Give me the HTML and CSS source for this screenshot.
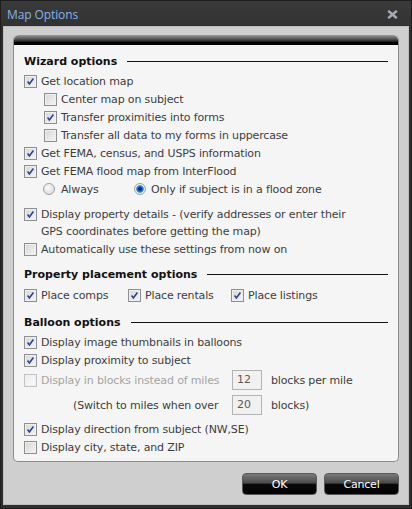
FILE: index.html
```html
<!DOCTYPE html>
<html>
<head>
<meta charset="utf-8">
<link rel="stylesheet" href="styles.css">
</head>
<body>
<div class="window">
  <div class="titlebar">
    <span class="title">Map Options</span>
    <svg class="close" width="11" height="9" viewBox="0 0 11 9"><path d="M1.2 0.8 L9.8 8.2 M9.8 0.8 L1.2 8.2" stroke="#a3adb8" stroke-width="2.4" fill="none"/></svg>
  </div>
  <div class="client">
    <div class="panel">
      <div class="panel-top"></div>
      <div class="panel-body">
        <div class="section-head first"><span>Wizard options</span><i class="rule"></i></div>
        <div class="row"><span class="cb on"></span><span class="lbl">Get location map</span></div>
        <div class="row sub"><span class="cb"></span><span class="lbl">Center map on subject</span></div>
        <div class="row sub"><span class="cb on"></span><span class="lbl">Transfer proximities into forms</span></div>
        <div class="row sub"><span class="cb"></span><span class="lbl">Transfer all data to my forms in uppercase</span></div>
        <div class="row"><span class="cb on"></span><span class="lbl">Get FEMA, census, and USPS information</span></div>
        <div class="row"><span class="cb on"></span><span class="lbl">Get FEMA flood map from InterFlood</span></div>
        <div class="row radios">
          <span class="radio-item always"><span class="rb"></span><span class="lbl">Always</span></span>
          <span class="radio-item"><span class="rb on"></span><span class="lbl">Only if subject is in a flood zone</span></span>
        </div>
        <div class="row multi"><span class="cb on"></span><span class="lbl">Display property details - (verify addresses or enter their<br>GPS coordinates before getting the map)</span></div>
        <div class="row"><span class="cb"></span><span class="lbl">Automatically use these settings from now on</span></div>

        <div class="section-head second"><span>Property placement options</span><i class="rule"></i></div>
        <div class="row place">
          <span class="place-item w1"><span class="cb on"></span><span class="lbl">Place comps</span></span>
          <span class="place-item w2"><span class="cb on"></span><span class="lbl">Place rentals</span></span>
          <span class="place-item"><span class="cb on"></span><span class="lbl">Place listings</span></span>
        </div>

        <div class="section-head third"><span>Balloon options</span><i class="rule"></i></div>
        <div class="row"><span class="cb on"></span><span class="lbl">Display image thumbnails in balloons</span></div>
        <div class="row"><span class="cb on"></span><span class="lbl">Display proximity to subject</span></div>
        <div class="row field-row">
          <span class="field-label"><span class="cb disabled"></span><span class="lbl dim">Display in blocks instead of miles</span></span>
          <span class="box">12</span>
          <span class="lbl after">blocks per mile</span>
        </div>
        <div class="row field-row second-field">
          <span class="field-label indent"><span class="lbl">(Switch to miles when over</span></span>
          <span class="box">20</span>
          <span class="lbl after">blocks)</span>
        </div>
        <div class="row after-fields"><span class="cb on"></span><span class="lbl">Display direction from subject (NW,SE)</span></div>
        <div class="row"><span class="cb"></span><span class="lbl">Display city, state, and ZIP</span></div>
      </div>
    </div>
    <div class="buttons">
      <button class="btn">OK</button>
      <button class="btn">Cancel</button>
    </div>
  </div>
</div>
</body>
</html>
```

FILE: styles.css
```css
* { box-sizing: border-box; }
html, body { margin: 0; padding: 0; }
body {
  width: 412px;
  height: 509px;
  background: #2e2e2e;
  font-family: "DejaVu Sans", sans-serif;
  font-size: 11px;
  overflow: hidden;
}
.window {
  width: 412px;
  height: 509px;
  display: flex;
  flex-direction: column;
  background: #2f2f2f;
  border: 1px solid #1e1e1e;
}
.titlebar {
  height: 25px;
  flex: none;
  display: flex;
  align-items: center;
  justify-content: space-between;
  padding: 0 13px 0 6px;
  background: linear-gradient(#3a3a3a, #323232);
}
.title {
  font-family: "Open Sans", sans-serif;
  font-size: 12px;
  color: #86b2e4;
  letter-spacing: -0.1px;
  margin-top: 1px;
}
.close { display: block; margin-top: 1px; }
.client {
  flex: 1;
  margin: 0 2px 3px 2px;
  background: #cfcfcf;
  border: 1px solid #bdbdbd;
  padding: 8px 9px 0 9px;
  display: flex;
  flex-direction: column;
}
.panel {
  height: 427px;
  border-radius: 5px;
  background: #f5f5f5;
  border: 1px solid #8d8d8d;
  border-top: none;
  display: flex;
  flex-direction: column;
  overflow: hidden;
}
.panel-top {
  height: 10px;
  flex: none;
  background: linear-gradient(#9a9a9a 0, #555 40%, #222 65%, #000 70%, #000 100%);
  border-radius: 5px 5px 0 0;
}
.panel-body {
  padding: 7px 10px 0 10px;
  color: #3d3d3d;
}
.section-head {
  height: 18px;
  display: flex;
  align-items: center;
  font-weight: bold;
  color: #111;
}
.section-head.first { margin-bottom: 2px; }
.section-head.second { margin-top: 7px; margin-bottom: 3px; }
.section-head.third { margin-top: 9px; margin-bottom: 2px; }
.rule {
  flex: 1;
  height: 1px;
  background: #111;
  margin-left: 10px;
}
.row {
  height: 18px;
  display: flex;
  align-items: center;
  white-space: nowrap;
}
.lbl { letter-spacing: -0.15px; }
.row .cb + .lbl { margin-left: 4px; }
.row.sub { padding-left: 20px; }
.cb {
  width: 13px;
  height: 13px;
  flex: none;
  border: 1px solid #8e8f90;
  background: linear-gradient(135deg, #d6d6d6, #f5f5f5);
  box-shadow: inset 0 0 0 1px #f0f0f0;
}
.cb.on {
  background-image: url("data:image/svg+xml;utf8,<svg xmlns='http://www.w3.org/2000/svg' width='11' height='11' viewBox='0 0 11 11'><path d='M2.6 5.6 L4.4 8 L8.4 2.6' stroke='%232a4193' stroke-width='1.6' fill='none'/></svg>"), linear-gradient(135deg, #d6d6d6, #f5f5f5);
  background-repeat: no-repeat;
  background-position: center;
}
.cb.disabled {
  border-color: #c3c3c3;
  background: linear-gradient(135deg, #ececec, #fafafa);
}
.dim { color: #a4a4a4; }
.radios { padding-left: 19px; }
.radio-item { display: flex; align-items: center; }
.radio-item.always { width: 91px; }
.rb {
  width: 12px;
  height: 12px;
  flex: none;
  border-radius: 50%;
  border: 1px solid #a0a0a0;
  background: radial-gradient(circle at 40% 35%, #fbfbfb, #d4d4d4);
  margin-right: 6px;
}
.rb.on {
  background: radial-gradient(circle, #0d2c63 0, #0d2c63 1.3px, #1c74d6 2.6px, #56a2ea 3.6px, #f3f3f3 4.2px, #d8d8d8 100%);
  margin-right: 5px;
}
.multi {
  height: 34px;
  margin-top: 8px;
  align-items: flex-start;
  line-height: 17px;
}
.multi .cb { margin-top: 2px; }
.place-item { display: flex; align-items: center; }
.place-item .lbl { margin-left: 4px; }
.place-item.w1 { width: 104px; }
.place-item.w2 { width: 103px; }
.field-row { height: 20px; margin-top: 1px; }
.field-label { width: 208px; display: flex; align-items: center; flex: none; }
.field-label .lbl { margin-left: 4px; }
.field-label.indent { padding-left: 45px; }
.box {
  width: 30px;
  height: 20px;
  flex: none;
  border: 1px solid #b3b3b3;
  background: #f1f1f1;
  color: #5a5a5a;
  font-size: 11px;
  padding-left: 4px;
  line-height: 18px;
}
.after { margin-left: 9px; }
.second-field { margin-top: 5px; }
.after-fields { margin-top: 5px; }
.buttons {
  display: flex;
  justify-content: flex-end;
  gap: 7px;
  margin-top: 11px;
}
.btn {
  width: 75px;
  height: 22px;
  border: 1px solid #5a5a5a;
  border-radius: 4px;
  background: linear-gradient(#7a7a7a 0, #4a4a4a 45%, #0a0a0a 52%, #000 100%);
  color: #fff;
  font-family: "DejaVu Sans", sans-serif;
  font-size: 11px;
  padding: 0;
  letter-spacing: -0.2px;
}
```
